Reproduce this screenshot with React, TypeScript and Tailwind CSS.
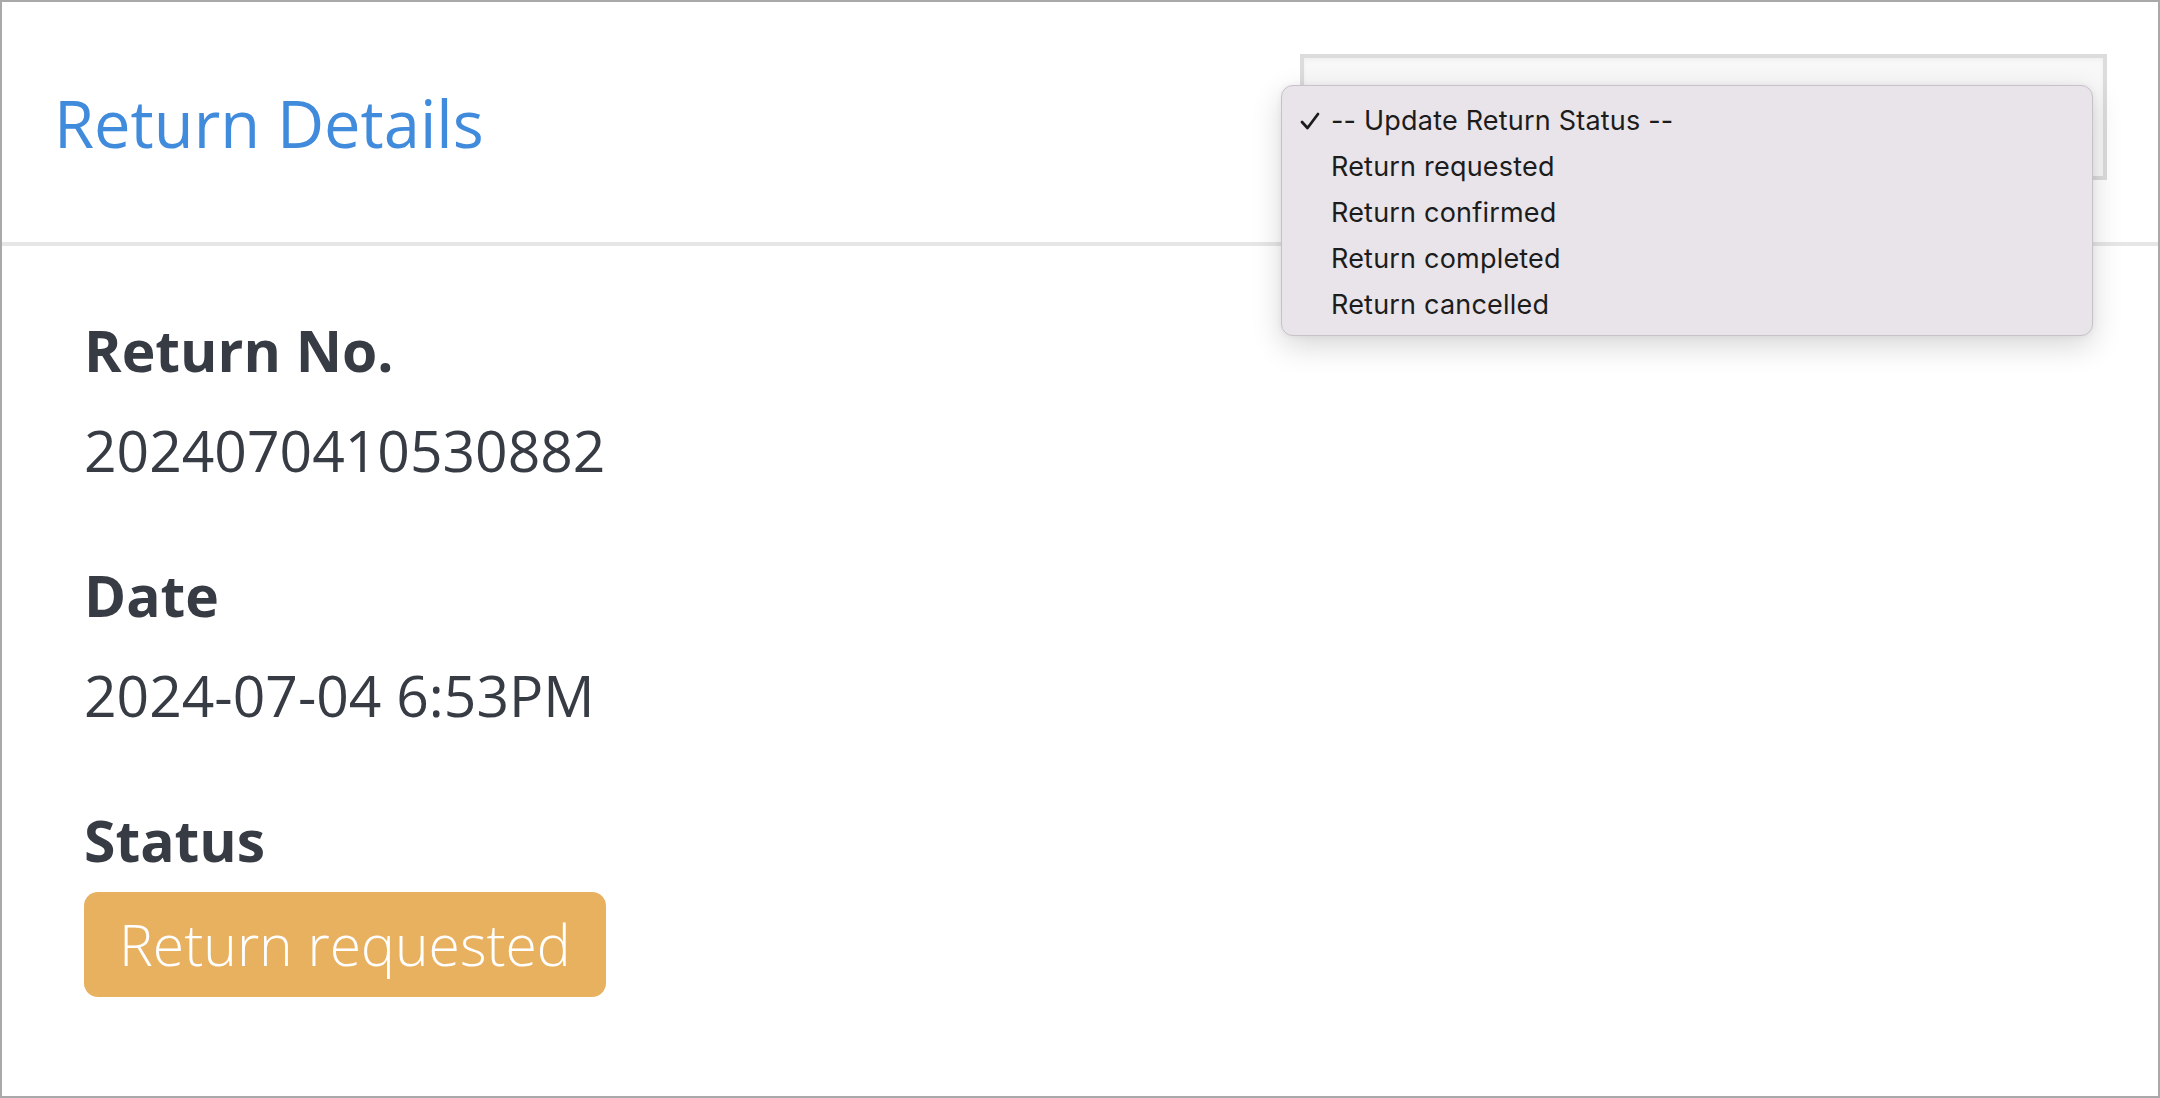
const statusOptions = [
  "-- Update Return Status --",
  "Return requested",
  "Return confirmed",
  "Return completed",
  "Return cancelled",
];

const Field = ({
  label,
  value,
  first,
}: {
  label: string;
  value: string;
  first?: boolean;
}) => (
  <div className={first ? "" : "mt-[76px]"}>
    <h3 className="text-[57px] leading-[1.2] font-bold text-[#373b44]">
      {label}
    </h3>
    <p className="mt-[32px] text-[57px] leading-[1.2] font-normal text-[#373b44]">
      {value}
    </p>
  </div>
);

const App = () => {
  return (
    <div className="w-[2160px] h-[1098px] bg-white border-2 border-[#a9a9a9] font-['Open_Sans',sans-serif] overflow-hidden">
      {/* Header */}
      <div className="h-[244px] flex items-start justify-between pt-[52px] pl-[52px] pr-[51px] border-b-4 border-[#e6e6e6]">
        <h2 className="mt-[30px] text-[65px] leading-[1.2] font-normal text-[#418bdc]">
          Return Details
        </h2>

        {/* Select with its open menu */}
        <div className="relative">
          <div className="w-[807px] h-[126px] border-4 border-[#dcdcdc] bg-[#f8f8f8] shadow-[inset_0_2px_4px_rgba(0,0,0,0.04)]" />
          <div className="absolute left-[-19px] top-[31px] w-[812px] rounded-[12px] bg-[#e8e4e9] border border-[#c6c2c7] shadow-[0_10px_30px_rgba(0,0,0,0.16),0_0_6px_rgba(0,0,0,0.06)] pt-[12px] pb-[7px] font-['Inter',sans-serif] text-[27px] tracking-[0.2px] text-[#1c1c1c]">
            {statusOptions.map((opt, i) => (
              <div key={opt} className="h-[46px] flex items-center">
                <span className="w-[49px] pl-[18px] flex items-center">
                  {i === 0 && (
                    <svg width="20" height="18" viewBox="0 0 20 18" fill="none">
                      <path
                        d="M2 10 L7.5 16 L18 2"
                        stroke="#1c1c1c"
                        strokeWidth="2.8"
                        strokeLinecap="round"
                        strokeLinejoin="round"
                      />
                    </svg>
                  )}
                </span>
                <span>{opt}</span>
              </div>
            ))}
          </div>
        </div>
      </div>

      {/* Body */}
      <div className="pl-[82px] pt-[70px]">
        <Field label="Return No." value="2024070410530882" first />
        <Field label="Date" value="2024-07-04 6:53PM" />

        <div className="mt-[76px]">
          <h3 className="text-[57px] leading-[1.2] font-bold text-[#373b44]">
            Status
          </h3>
          <span className="inline-block mt-[18px] px-[35px] pt-[18px] pb-[19px] rounded-[14px] bg-[#e8b160] text-white text-[57px] leading-[1.2] font-light">
            Return requested
          </span>
        </div>
      </div>
    </div>
  );
};

export default App;
